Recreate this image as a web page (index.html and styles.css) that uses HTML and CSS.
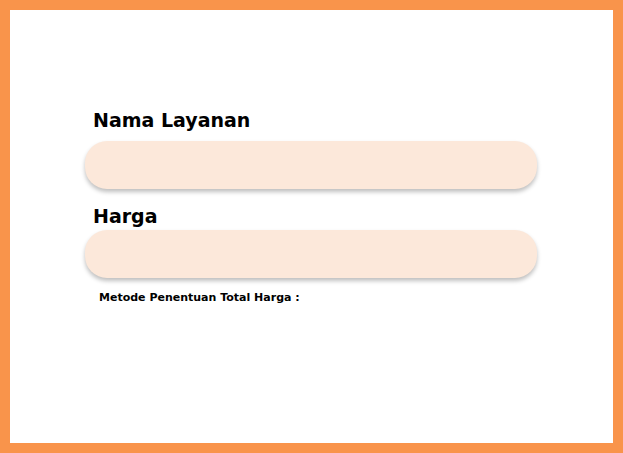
FILE: index.html
```html
<!DOCTYPE html>
<html>
<head>
<meta charset="utf-8">
<link rel="stylesheet" href="styles.css">
</head>
<body>
<div class="frame">
  <form class="form">
    <label class="label">Nama Layanan</label>
    <div class="field"></div>
    <label class="label label-2">Harga</label>
    <div class="field"></div>
    <p class="note">Metode Penentuan Total Harga :</p>
  </form>
</div>
</body>
</html>
```
FILE: styles.css
```css
html, body {
  margin: 0;
  padding: 0;
}
body {
  width: 623px;
  height: 453px;
  font-family: "DejaVu Sans", "Open Sans", sans-serif;
}
.frame {
  box-sizing: border-box;
  width: 623px;
  height: 453px;
  border: 10px solid #f9944b;
  background: #ffffff;
  padding: 98px 0 0 75px;
}
.form {
  display: flex;
  flex-direction: column;
  width: 452px;
  margin: 0;
}
.label {
  display: block;
  margin-left: 8px;
  font-size: 19px;
  font-weight: 700;
  line-height: 24px;
  color: #000;
  margin-bottom: 9px;
}
.label-2 {
  margin-top: 15px;
  margin-bottom: 2px;
}
.field {
  height: 48px;
  border-radius: 22px;
  background: #fce8da;
  box-shadow: 0 3px 4px rgba(0, 0, 0, 0.25);
}
.note {
  margin: 13px 0 0 14px;
  font-size: 11px;
  font-weight: 700;
  line-height: 14px;
  color: #000;
}
```
